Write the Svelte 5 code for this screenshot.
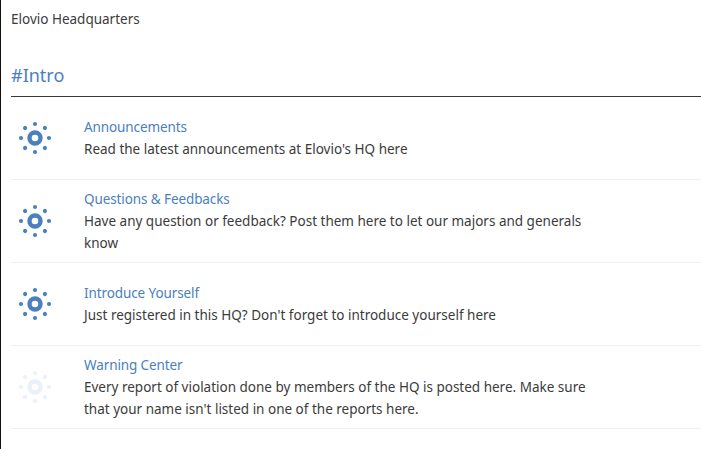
<script>
	const forums = [
		{ title: 'Announcements', text: "Read the latest announcements at Elovio's HQ here" },
		{ title: 'Questions & Feedbacks', text: 'Have any question or feedback? Post them here to let our majors and generals know' },
		{ title: 'Introduce Yourself', text: "Just registered in this HQ? Don't forget to introduce yourself here" },
		{ title: 'Warning Center', text: "Every report of violation done by members of the HQ is posted here. Make sure that your name isn't listed in one of the reports here.", faded: true }
	];
	const dots = [0, 45, 90, 135, 180, 225, 270, 315];
</script>

<div class="page">
	<p class="brand">Elovio Headquarters</p>
	<h2 class="section">#Intro</h2>
	<ul class="forums">
		{#each forums as forum}
			<li class="forum">
				<svg class="icon" class:faded={forum.faded} viewBox="0 0 34 34" width="34" height="34">
					<circle cx="17" cy="17" r="5.5" fill="none" stroke="#4a80bd" stroke-width="4.4" />
					{#each dots as a}
						<circle cx="17" cy="3" r="2.1" fill="#4a80bd" transform="rotate({a} 17 17)" />
					{/each}
				</svg>
				<div class="body">
					<a class="title" href="#top">{forum.title}</a>
					<p class="text">{forum.text}</p>
				</div>
			</li>
		{/each}
	</ul>
</div>

<style>
	:global(body) {
		background: #fff;
	}
	.page {
		height: 449px;
		box-sizing: border-box;
		border-left: 1px solid #111;
		padding: 10px 0 0 10px;
		font-family: 'Noto Sans', sans-serif;
		font-size: 13.5px;
		color: #3b3b3b;
		overflow: hidden;
	}
	.brand {
		margin: 0;
		line-height: 19px;
	}
	.section {
		margin: 30px 0 0;
		padding-bottom: 5px;
		border-bottom: 1px solid #3a3a35;
		font-size: 18px;
		font-weight: 400;
		line-height: 32px;
		color: #4a80bd;
	}
	.forums {
		list-style: none;
		margin: 0;
		padding: 0;
	}
	.forum {
		display: flex;
		align-items: center;
		height: 83px;
		box-sizing: border-box;
		border-bottom: 1px solid #f0f0f0;
	}
	.icon {
		flex: none;
		margin: 0 0 0 7px;
	}
	.icon.faded {
		opacity: 0.1;
	}
	.body {
		width: 520px;
		margin-left: 32px;
	}
	.title {
		display: block;
		color: #4a80bd;
		text-decoration: none;
		line-height: 22px;
		letter-spacing: -0.1px;
	}
	.text {
		margin: 0;
		line-height: 22px;
	}
</style>
